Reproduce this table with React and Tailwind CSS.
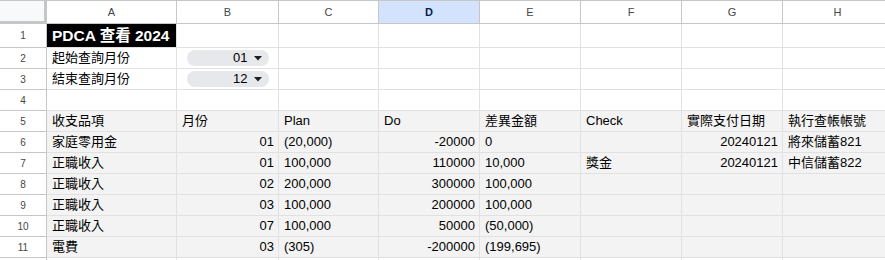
import React from 'react';

const colLetters = ['A', 'B', 'C', 'D', 'E', 'F', 'G', 'H'];

// each row: [A, B, C, D, E, F, G, H]; r = right aligned
const dataRows = [
  [{ t: '收支品項' }, { t: '月份' }, { t: 'Plan' }, { t: 'Do' }, { t: '差異金額' }, { t: 'Check' }, { t: '實際支付日期' }, { t: '執行查帳帳號' }],
  [{ t: '家庭零用金' }, { t: '01', r: true }, { t: '(20,000)' }, { t: '-20000', r: true }, { t: '0' }, { t: '' }, { t: '20240121', r: true }, { t: '將來儲蓄821' }],
  [{ t: '正職收入' }, { t: '01', r: true }, { t: '100,000' }, { t: '110000', r: true }, { t: '10,000' }, { t: '獎金' }, { t: '20240121', r: true }, { t: '中信儲蓄822' }],
  [{ t: '正職收入' }, { t: '02', r: true }, { t: '200,000' }, { t: '300000', r: true }, { t: '100,000' }, { t: '' }, { t: '' }, { t: '' }],
  [{ t: '正職收入' }, { t: '03', r: true }, { t: '100,000' }, { t: '200000', r: true }, { t: '100,000' }, { t: '' }, { t: '' }, { t: '' }],
  [{ t: '正職收入' }, { t: '07', r: true }, { t: '100,000' }, { t: '50000', r: true }, { t: '(50,000)' }, { t: '' }, { t: '' }, { t: '' }],
  [{ t: '電費' }, { t: '03', r: true }, { t: '(305)' }, { t: '-200000', r: true }, { t: '(199,695)' }, { t: '' }, { t: '' }, { t: '' }],
];

function RowHead({ n, h }) {
  return (
    <div className={`${h} flex items-center justify-center border-r border-b border-[#c4c7c5] bg-white text-[10px] text-[#444746]`}>
      {n}
    </div>
  );
}

function Cell({ children, right, gray, h }) {
  return (
    <div
      className={`${h} flex items-center overflow-hidden whitespace-nowrap border-r border-b border-[#e1e1e1] pl-[5px] pr-[4px] text-[13px] text-black ${
        right ? 'justify-end' : 'justify-start'
      } ${gray ? 'bg-[#f3f3f3]' : 'bg-white'}`}
    >
      {children}
    </div>
  );
}

function Chip({ value }) {
  return (
    <div className="flex h-[16px] w-[82px] items-center justify-end gap-[6px] rounded-full bg-[#e6e8eb] pr-[7px] text-[13px] text-black">
      <span>{value}</span>
      <svg width="8" height="5" viewBox="0 0 8 5">
        <path d="M0 0 L8 0 L4 4.5 Z" fill="#1f1f1f" />
      </svg>
    </div>
  );
}

export default function App() {
  return (
    <div
      className="h-[260px] w-[885px] overflow-hidden bg-white"
      style={{ fontFamily: '"Liberation Sans", Arial, "Noto Sans CJK TC", sans-serif' }}
    >
      <div className="grid grid-cols-[47px_130px_102px_100px_101px_101px_101px_101px_110px]">
        {/* column header row */}
        <div className="h-[24px] border-t border-r-[3px] border-b-[3px] border-[#c4c7c5] bg-[#f8f9fa]" />
        {colLetters.map((c) => (
          <div
            key={c}
            className={`flex h-[24px] items-center justify-center border-t border-r border-b border-[#c4c7c5] text-[11px] ${
              c === 'D' ? 'bg-[#d3e3fd] font-bold text-[#041e49]' : 'bg-white text-[#444746]'
            }`}
          >
            {c}
          </div>
        ))}

        {/* row 1 */}
        <RowHead n={1} h="h-[24px]" />
        <div className="flex h-[24px] items-center overflow-hidden whitespace-nowrap border-r border-b border-[#e1e1e1] bg-black pl-[5px] text-[15.5px] font-bold text-white">
          PDCA 查看 2024
        </div>
        {[...Array(7)].map((_, i) => (
          <Cell key={i} h="h-[24px]" />
        ))}

        {/* row 2 */}
        <RowHead n={2} h="h-[21px]" />
        <Cell h="h-[21px]">起始查詢月份</Cell>
        <div className="flex h-[21px] items-center justify-center border-r border-b border-[#e1e1e1] bg-white">
          <Chip value="01" />
        </div>
        {[...Array(6)].map((_, i) => (
          <Cell key={i} h="h-[21px]" />
        ))}

        {/* row 3 */}
        <RowHead n={3} h="h-[21px]" />
        <Cell h="h-[21px]">結束查詢月份</Cell>
        <div className="flex h-[21px] items-center justify-center border-r border-b border-[#e1e1e1] bg-white">
          <Chip value="12" />
        </div>
        {[...Array(6)].map((_, i) => (
          <Cell key={i} h="h-[21px]" />
        ))}

        {/* row 4 */}
        <RowHead n={4} h="h-[21px]" />
        {[...Array(8)].map((_, i) => (
          <Cell key={i} h="h-[21px]" />
        ))}

        {/* rows 5-11 */}
        {dataRows.map((row, ri) => (
          <React.Fragment key={ri}>
            <RowHead n={ri + 5} h="h-[21px]" />
            {row.map((c, ci) => (
              <Cell key={ci} h="h-[21px]" right={c.r} gray>
                {c.t}
              </Cell>
            ))}
          </React.Fragment>
        ))}

        {/* row 12, only its top edge shows */}
        <RowHead n="" h="h-[21px]" />
        {[...Array(8)].map((_, i) => (
          <Cell key={i} h="h-[21px]" />
        ))}
      </div>
    </div>
  );
}
